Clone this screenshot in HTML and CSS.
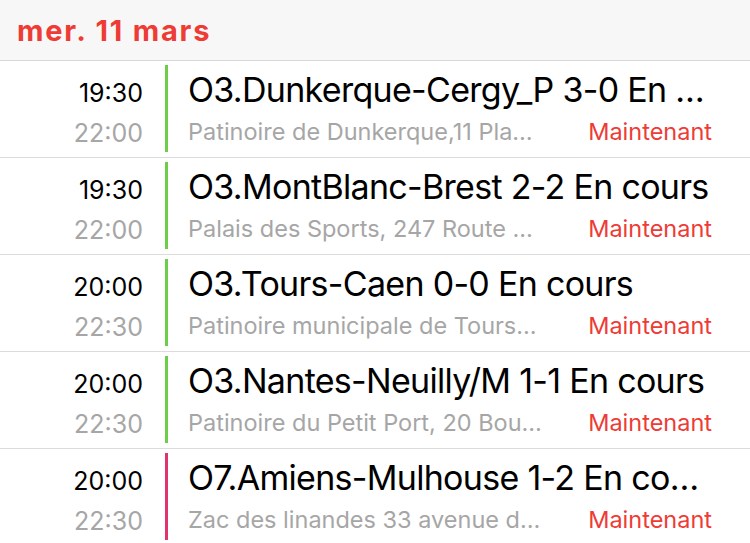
FILE: index.html
```html
<!DOCTYPE html>
<html lang="fr">
<head>
<meta charset="utf-8">
<link rel="stylesheet" href="styles.css">
</head>
<body>
<div class="header">mer. 11 mars</div>
<div class="list">
  <div class="row">
    <div class="times"><div class="start">19:30</div><div class="end">22:00</div></div>
    <div class="bar green"></div>
    <div class="info">
      <div class="title">O3.Dunkerque-Cergy_P 3-0 En cours</div>
      <div class="sub"><span class="place">Patinoire de Dunkerque,11 Place Paul Asseman</span><span class="now">Maintenant</span></div>
    </div>
  </div>
  <div class="row">
    <div class="times"><div class="start">19:30</div><div class="end">22:00</div></div>
    <div class="bar green"></div>
    <div class="info">
      <div class="title">O3.MontBlanc-Brest 2-2 En cours</div>
      <div class="sub"><span class="place">Palais des Sports, 247 Route des Contamines</span><span class="now">Maintenant</span></div>
    </div>
  </div>
  <div class="row">
    <div class="times"><div class="start">20:00</div><div class="end">22:30</div></div>
    <div class="bar green"></div>
    <div class="info">
      <div class="title">O3.Tours-Caen 0-0 En cours</div>
      <div class="sub"><span class="place">Patinoire municipale de Tours, rue de l'Élysée</span><span class="now">Maintenant</span></div>
    </div>
  </div>
  <div class="row">
    <div class="times"><div class="start">20:00</div><div class="end">22:30</div></div>
    <div class="bar green"></div>
    <div class="info">
      <div class="title">O3.Nantes-Neuilly/M 1-1 En cours</div>
      <div class="sub"><span class="place">Patinoire du Petit Port, 20 Boulevard du Petit Port</span><span class="now">Maintenant</span></div>
    </div>
  </div>
  <div class="row">
    <div class="times"><div class="start">20:00</div><div class="end">22:30</div></div>
    <div class="bar pink"></div>
    <div class="info">
      <div class="title">O7.Amiens-Mulhouse 1-2 En cours</div>
      <div class="sub"><span class="place">Zac des linandes 33 avenue des Béthunes</span><span class="now">Maintenant</span></div>
    </div>
  </div>
</div>
</body>
</html>
```
FILE: styles.css
```css
html, body {
  margin: 0;
  padding: 0;
  background: #ffffff;
  font-family: Inter, "Liberation Sans", Arial, sans-serif;
  overflow: hidden;
}
.header {
  height: 61px;
  box-sizing: border-box;
  background: #f7f7f7;
  border-bottom: 1px solid #d9d9d9;
  color: #ee3b35;
  font-weight: 700;
  font-size: 29px;
  letter-spacing: 1.8px;
  line-height: 61px;
  padding-left: 17px;
}
.row {
  display: flex;
  height: 97px;
  box-sizing: border-box;
  border-bottom: 1px solid #dcdcdc;
}
.times {
  width: 143px;
  text-align: right;
  flex: none;
}
.start {
  margin-top: 17px;
  font-size: 25px;
  line-height: 30px;
  color: #000;
}
.end {
  margin-top: 10px;
  font-size: 25px;
  line-height: 30px;
  color: #a6a6a6;
}
.bar {
  flex: none;
  width: 3px;
  margin: 4px 0 5px 22px;
}
.green { background: #6bcd48; }
.pink { background: #e2336c; }
.info {
  flex: 1;
  min-width: 0;
  margin-left: 20px;
  margin-right: 38px;
}
.title {
  margin-top: 9px;
  font-size: 34px;
  letter-spacing: -0.7px;
  line-height: 40px;
  color: #000;
  white-space: nowrap;
  overflow: hidden;
  text-overflow: ellipsis;
}
.sub {
  display: flex;
  margin-top: 8px;
  font-size: 23.5px;
  line-height: 28px;
}
.place {
  flex: 1;
  min-width: 0;
  color: #a6a6a6;
  white-space: nowrap;
  overflow: hidden;
  text-overflow: ellipsis;
  margin-right: 46px;
}
.now {
  flex: none;
  color: #ee3b35;
}
```
